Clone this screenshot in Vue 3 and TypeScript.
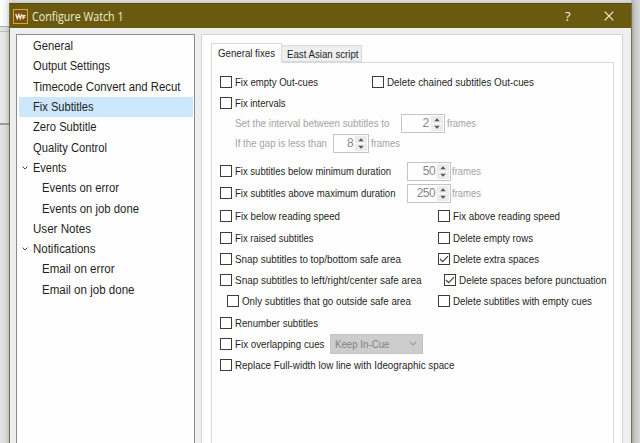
<script setup lang="ts">
import type { Directive } from 'vue'

interface NavItem { label: string; width: number; child?: boolean; open?: boolean; active?: boolean }
interface Check { label: string; width: number; checked?: boolean; indent?: boolean }
interface Row { left: Check; right?: Check; combo?: string; tall?: boolean }

// Condenses or stretches a label to its design width.
const vFit: Directive<HTMLElement, number> = {
  mounted(el, { value }) {
    const natural = el.getBoundingClientRect().width
    el.style.transform = `scaleX(${value / natural})`
    el.style.marginRight = `${value - natural}px`
  },
}

const nav: NavItem[] = [
  { label: 'General', width: 40 },
  { label: 'Output Settings', width: 77 },
  { label: 'Timecode Convert and Recut', width: 147.5 },
  { label: 'Fix Subtitles', width: 60.5, active: true },
  { label: 'Zero Subtitle', width: 63.5 },
  { label: 'Quality Control', width: 74 },
  { label: 'Events', width: 33.5, open: true },
  { label: 'Events on error', width: 77, child: true },
  { label: 'Events on job done', width: 97, child: true },
  { label: 'User Notes', width: 58 },
  { label: 'Notifications', width: 62.5, open: true },
  { label: 'Email on error', width: 72.5, child: true },
  { label: 'Email on job done', width: 92.5, child: true },
]

const rows: Row[] = [
  { left: { label: 'Fix below reading speed', width: 105 }, right: { label: 'Fix above reading speed', width: 107 }, tall: true },
  { left: { label: 'Fix raised subtitles', width: 78.5 }, right: { label: 'Delete empty rows', width: 80 } },
  { left: { label: 'Snap subtitles to top/bottom safe area', width: 166 }, right: { label: 'Delete extra spaces', width: 86, checked: true } },
  { left: { label: 'Snap subtitles to left/right/center safe area', width: 186.5 }, right: { label: 'Delete spaces before punctuation', width: 147.5, checked: true, indent: true } },
  { left: { label: 'Only subtitles that go outside safe area', width: 169, indent: true }, right: { label: 'Delete subtitles with empty cues', width: 139 }, tall: true },
  { left: { label: 'Renumber subtitles', width: 83 } },
  { left: { label: 'Fix overlapping cues', width: 89.5 }, combo: 'Keep In-Cue' },
  { left: { label: 'Replace Full-width low line with Ideographic space', width: 219.5 }, tall: true },
]
const durations = [
  { label: 'Fix subtitles below minimum duration', width: 156, value: 50 },
  { label: 'Fix subtitles above maximum duration', width: 160.5, value: 250 },
]
</script>

<template>
  <div class="desktop">
    <div class="behind"><div class="behind-top"></div><div class="behind-mid"></div></div>
    <div class="window">
      <header class="titlebar">
        <svg class="logo" viewBox="0 0 15 15" width="15" height="15">
          <rect x=".5" y=".5" width="14" height="14" fill="#79520f" stroke="#d9a63c" />
          <path d="M2.8 5l1.5 4.6 1.5-4 1.5 4L8.8 5M10 10.3V6.6h2.6M10 8.4h2" fill="none" stroke="#fff3dd" stroke-width="1.3" />
        </svg>
        <span v-fit="91.5" class="fit title">Configure Watch 1</span>
        <span class="help">?</span>
        <svg class="close" viewBox="0 0 10 10" width="10" height="10"><path d="M.7.7l8.6 8.6M9.3.7L.7 9.3" stroke="#f3f0dc" stroke-width="1.2" /></svg>
      </header>
      <div class="content">
        <nav class="tree">
          <div v-for="n in nav" :key="n.label" class="node" :class="{ child: n.child, active: n.active }">
            <span class="twist"><svg v-if="n.open" viewBox="0 0 6 4" width="6" height="4"><path d="M.6.6L3 3 5.4.6" fill="none" stroke="#444" stroke-width="1" /></svg></span>
            <span v-fit="n.width" class="fit">{{ n.label }}</span>
          </div>
        </nav>
        <main class="pane">
          <div class="tabs">
            <div class="tab on"><span v-fit="57" class="fit">General fixes</span></div>
            <div class="tab"><span v-fit="71.5" class="fit">East Asian script</span></div>
          </div>
          <section class="sheet">
            <div class="row tall">
              <div class="cell first"><i class="box"></i><span v-fit="83" class="fit">Fix empty Out-cues</span></div>
              <div class="cell"><i class="box"></i><span v-fit="147" class="fit">Delete chained subtitles Out-cues</span></div>
            </div>
            <div class="row"><i class="box"></i><span v-fit="50.5" class="fit">Fix intervals</span></div>
            <div class="row sub">
              <span v-fit="154.5" class="fit">Set the interval between subtitles to</span>
              <div class="spin wide"><span>2</span><b><svg viewBox="0 0 10 15" width="10" height="15"><path d="M0 7.5h10" stroke="#fff" /><path d="M2.3 5.3L5 2.3 7.7 5.3zM2.3 9.7L5 12.7 7.7 9.7z" fill="#555" /></svg></b></div>
              <span v-fit="29" class="fit">frames</span>
            </div>
            <div class="row sub second">
              <span v-fit="92" class="fit">If the gap is less than</span>
              <div class="spin small"><span>8</span><b><svg viewBox="0 0 10 15" width="10" height="15"><path d="M0 7.5h10" stroke="#fff" /><path d="M2.3 5.3L5 2.3 7.7 5.3zM2.3 9.7L5 12.7 7.7 9.7z" fill="#555" /></svg></b></div>
              <span v-fit="29" class="fit">frames</span>
            </div>
            <div v-for="d in durations" :key="d.value" class="row tall">
              <div class="cell duration"><i class="box"></i><span v-fit="d.width" class="fit">{{ d.label }}</span></div>
              <div class="spin"><span>{{ d.value }}</span><b><svg viewBox="0 0 10 15" width="10" height="15"><path d="M0 7.5h10" stroke="#fff" /><path d="M2.3 5.3L5 2.3 7.7 5.3zM2.3 9.7L5 12.7 7.7 9.7z" fill="#555" /></svg></b></div>
              <span v-fit="29" class="fit muted">frames</span>
            </div>
            <div class="options">
              <div v-for="r in rows" :key="r.left.label" class="row opt" :class="{ tall: r.tall }">
                <div class="cell" :class="{ half: r.right, indent: r.left.indent }"><i class="box"></i><span v-fit="r.left.width" class="fit">{{ r.left.label }}</span></div>
                <div v-if="r.combo" class="combo">
                  <span v-fit="54.5" class="fit">{{ r.combo }}</span>
                  <svg viewBox="0 0 8 5" width="8" height="5"><path d="M.7.7L4 4 7.3.7" fill="none" stroke="#999" stroke-width="1.1" /></svg>
                </div>
                <div v-if="r.right" class="cell" :class="{ nudge: r.right.indent }">
                  <i class="box"><svg v-if="r.right.checked" viewBox="0 0 10 10" width="10" height="10"><path d="M1 5l2.7 2.7L9 2.2" fill="none" stroke="#444" stroke-width="1.2" /></svg></i>
                  <span v-fit="r.right.width" class="fit">{{ r.right.label }}</span>
                </div>
              </div>
            </div>
          </section>
        </main>
      </div>
    </div>
  </div>
</template>

<style>
body { margin: 0; overflow: hidden; }
</style>

<style scoped>
* { box-sizing: border-box; }
.desktop { display: flex; width: 640px; height: 443px; overflow: hidden; background: linear-gradient(90deg, #e0e0e0 630px, #bcbcbc 632px, #d8d8d8 640px); font-family: "Liberation Sans", Arial, sans-serif; font-size: 11.4px; color: #1e1e24; }
.behind { width: 9px; flex: none; display: flex; flex-direction: column; background: linear-gradient(90deg, #e4e4e4, #d5d5d5); }
.behind-top { height: 27px; background: linear-gradient(90deg, #fff, #ededed); border-bottom: 1px solid #aaa; }
.behind-mid { height: 94px; margin-top: 4px; border-top: 1px solid #bbb; border-bottom: 2px solid #9a9a9a; background: linear-gradient(90deg, #ececec, #d7d7d7); }
.window { width: 623px; height: 450px; flex: none; margin-top: 3px; display: flex; flex-direction: column; border: 1px solid #74704a; border-top-color: #5b4e0c; background: #eeeeee; box-shadow: 0 0 4px rgba(0, 0, 0, .22); }
.titlebar { height: 24px; flex: none; display: flex; align-items: center; padding-left: 3px; background: #695a10; color: #f5f2e2; }
.logo { margin-right: 4px; flex: none; }
.title { font: 12.5px "Open Sans", "Noto Sans", sans-serif; color: #f1eedb; }
.help { margin-left: auto; margin-right: 33px; width: 6px; font: 13px "Open Sans", sans-serif; }
.close { margin-right: 17px; }
.fit { display: inline-block; flex: none; white-space: pre; transform-origin: 0 50%; }
.content { flex: 1; display: flex; gap: 6px; padding: 6px 8px 0 6px; }
.tree { width: 179px; flex: none; padding: 1px 1px 0 2px; background: #fefefe; border: 1px solid #8b8b8f; font-size: 12px; }
.node { display: flex; align-items: center; height: 20.3px; }
.twist { width: 13.5px; padding-left: 3px; flex: none; display: flex; }
.child .twist { width: 22.5px; }
.active { background: #cce6fc; }
.pane { flex: 1; padding: 8px 8px 0 9px; background: #fefefe; border: 1px solid #d6d6d9; display: flex; flex-direction: column; }
.tabs { display: flex; align-items: flex-end; height: 19px; flex: none; }
.tab { height: 17px; width: 80px; display: flex; align-items: center; padding-left: 5px; background: #efeff1; border: 1px solid #d9d9d9; border-left: 0; }
.tab.on { height: 20px; width: 71px; margin-bottom: -1px; z-index: 1; padding: 0 0 2px 6px; background: #fefefe; border-left: 1px solid #d9d9d9; border-bottom: 0; }
.sheet { flex: 1; border: 1px solid #d9d9d9; padding: 8px 0 0 8px; background: #fefefe; }
.row { display: flex; align-items: center; height: 20px; }
.opt { height: 21px; }
.row.tall { height: 22px; }
.cell { display: flex; align-items: center; flex: none; }
.first { width: 152px; }
.half { width: 218px; }
.indent { padding-left: 7px; }
.nudge { padding-left: 6px; }
.duration { width: 187px; }
.box { width: 12px; height: 12px; flex: none; margin-right: 3px; border: 1px solid #3c3c3c; background: #fff; display: block; }
.box svg { display: block; }
.sub { padding-left: 15px; color: #a3a3a3; }
.second { margin-bottom: 7px; }
.muted { color: #a3a3a3; }
.spin { width: 44px; height: 19px; flex: none; margin-right: 1px; padding: 0 1px; display: flex; align-items: center; justify-content: flex-end; gap: 2px; border: 1px solid #c4c4c4; background: #fefefe; color: #888; }
.spin span { font-size: 12px; letter-spacing: -.6px; }
.spin b { width: 12px; height: 15px; padding-left: 1px; background: #ebebeb; }
.spin svg { display: block; }
.wide { margin: 0 2px 0 11px; }
.small { width: 36px; margin: 0 2px 0 6px; }
.options { padding-top: 1px; }
.combo { width: 93px; height: 20px; margin-left: 5px; padding: 0 5px 0 4px; display: flex; align-items: center; justify-content: space-between; background: #cdcdcd; border: 1px solid #c3c3c3; color: #828282; }
</style>
